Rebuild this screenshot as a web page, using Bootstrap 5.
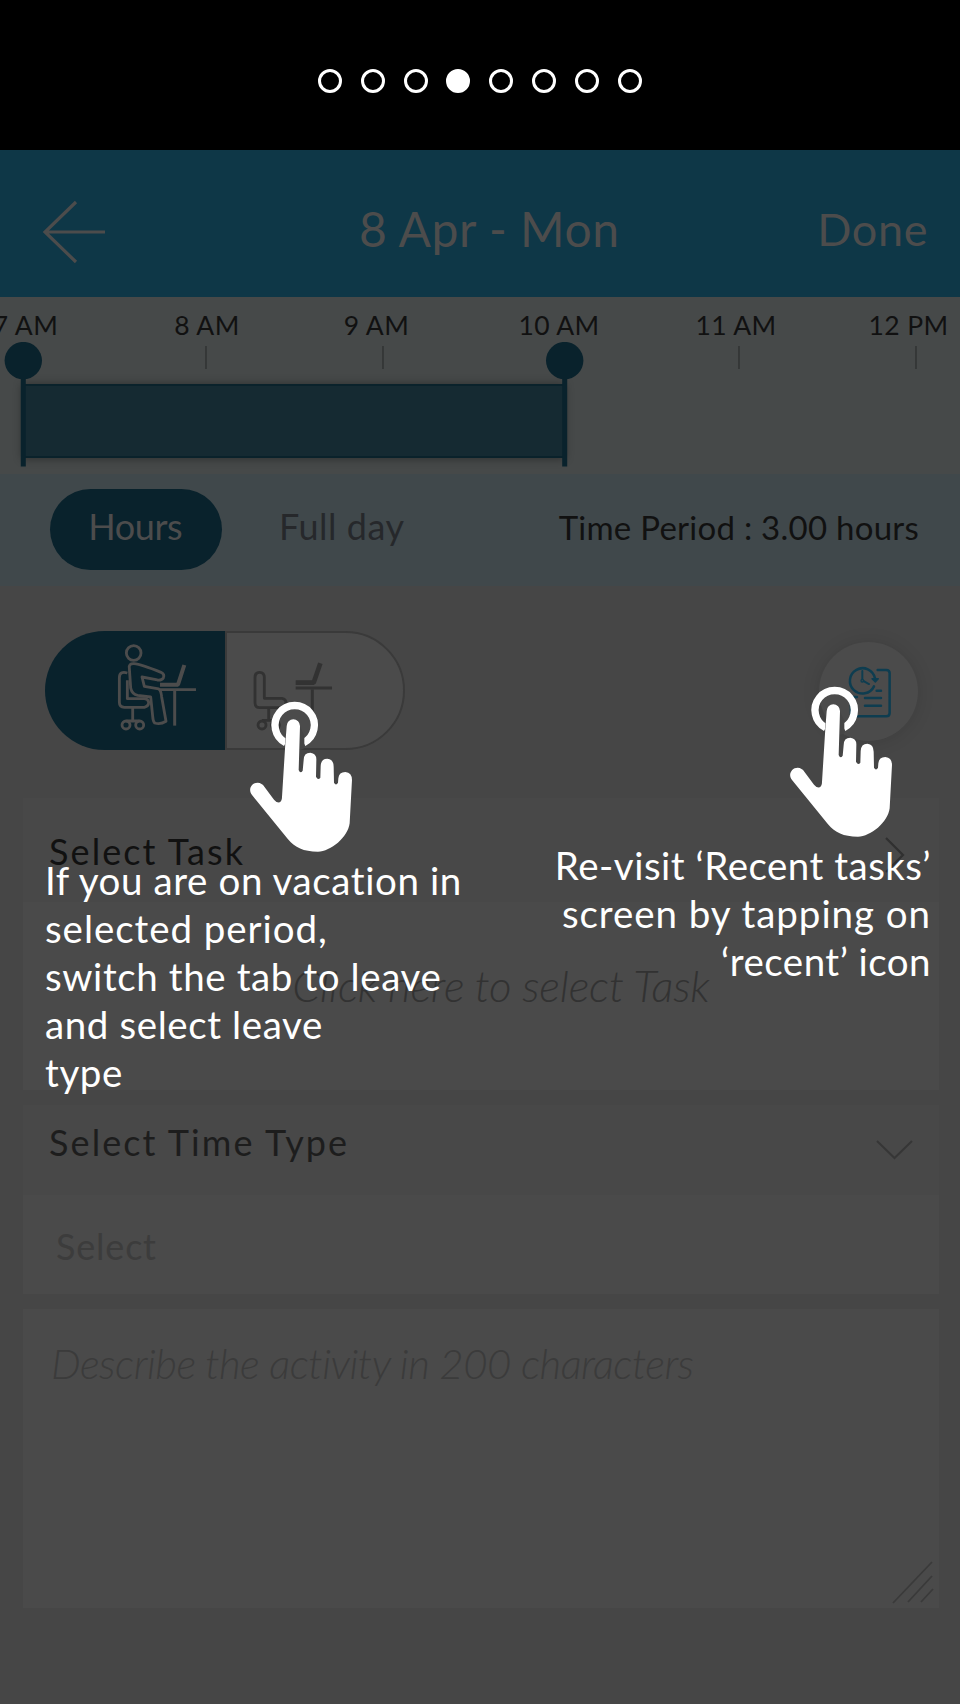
<!DOCTYPE html>
<html lang="en">
<head>
<meta charset="utf-8">
<meta name="viewport" content="width=device-width, initial-scale=1">
<title>Timesheet</title>
<link href="https://cdn.jsdelivr.net/npm/bootstrap@5.3.0/dist/css/bootstrap.min.css" rel="stylesheet">
<style>
body{background:#464646;font-family:Lato,"Open Sans",sans-serif;color:#111}
.screen{width:960px;height:1704px;overflow:hidden}
svg{display:block;flex:none}
.pager{height:150px;background:#000;padding:69px 0 0 318px}
.pager i{width:24px;height:24px;border:3px solid #fff;border-radius:50%;margin-right:18.8px}
.pager i.on{background:#fff}
.topbar{height:147px;background:#0e3747;color:#4c4c4c;padding:10px 32px 0 42px}
.topbar h1{font-size:48px;font-weight:400;margin-left:253px;letter-spacing:.55px}
.done{font-size:45px;padding-top:3px;letter-spacing:.6px}
.ruler{height:177px;background:#464949}
.hour-labels{display:grid;grid-template-columns:182px 181px 158px 207px 147px 198px;margin-left:-65.5px;padding-top:12px;height:45px;line-height:33px;font-size:26.5px;letter-spacing:.4px;text-align:center}
.band{height:112px;background:#40484b;padding:0 41px 0 49.5px}
.pill{width:172.5px;height:81px;border-radius:41px;background:#09222c;color:#4c4c4c;font-size:36px;padding:0 1px 8px 0;letter-spacing:-.4px;margin-top:-1px}
.fullday{font-size:36px;color:#26282b;padding-bottom:8px;margin-left:57px;letter-spacing:.5px}
.period{font-size:33px;padding-bottom:5px;letter-spacing:.25px}
.modes{height:212px;padding:45px 42px 0 45px}
.mode-on{width:180px;height:119px;border-radius:60px 0 0 60px;background:#09222c;padding:12px 0 0 71px}
.mode-off{width:180px;height:119px;border-radius:0 60px 60px 0;background:#4b4b4b;border:2px solid #3a3a3a;padding:27.5px 0 0 24.7px}
.recent{width:99px;height:99px;border-radius:50%;background:#4b4b4b;margin-top:11px;padding:21px 0 0 26.5px;box-shadow:0 1px 18px rgba(0,0,0,.12)}
.panel{margin:0 21px 15px 23px;background:#4a4a4a}
.panel-top{background:#484848;font-size:36px;padding-left:26px;letter-spacing:2.1px}
.ghost{font-style:italic;font-weight:300}
.pick{height:188px;font-size:44px;color:#323232;padding:0 0 22px 40px;letter-spacing:-.2px}
.pick-type{height:99px;font-size:36px;color:#3c3c3c;padding:2px 0 0 33px;letter-spacing:.8px}
.notes{height:299px;font-size:42px;line-height:50px;color:#3b3b3b;padding:29px 0 0 28px;letter-spacing:-.52px}
.grip{right:5px;bottom:4px}
.coach{color:#fff;font-size:38.5px;line-height:48px;letter-spacing:.6px;white-space:nowrap}
.coach .wide{letter-spacing:.95px}
.coach-a{left:45px;top:856px}
.coach-b{right:29px;top:841px;letter-spacing:.5px}
.tap-a{left:248.3px;top:700px}
.tap-b{left:788px;top:685px}
</style>
</head>
<body>
<svg width="0" height="0" class="position-absolute">
  <symbol id="tap" viewBox="655 270 320 460">
    <path d="M822 398A59 59 0 1 0 768 398" fill="none" stroke="#fff" stroke-width="22"/>
    <path fill="#464646" d="M766 400L771 348a20 20 0 0 1 40 0L824 378V415L812 420z"/>
    <path fill="#fff" d="M757 560L767 400L771 348a20 20 0 0 1 40 0L807 480Q812 493 819 482L822 450Q822 428 842 428Q861 430 860 450L859 500Q865 512 872 503L873 468Q874 446 893 446Q912 448 912 470L913 518Q919 529 925 518L926 505Q928 486 947 486Q967 488 967 510L960 640C955 682 903 725 865 725C820 725 797 713 775 688L667 555C654 540 665 518 684 518Q697 519 704 530L733 569Q741 579 750 577Q757 573 757 560Z"/>
  </symbol>
</svg>
<div class="screen position-relative">
  <div class="pager d-flex"><i></i><i></i><i></i><i class="on"></i><i></i><i></i><i></i><i></i></div>

  <header class="topbar d-flex align-items-center">
    <svg style="margin-top:6px" width="64" height="66" viewBox="0 0 64 66" fill="none" stroke="#4c4c4c" stroke-width="3.2"><path d="M34 3L3 33l31 30M3 33h60"/></svg>
    <h1 class="mb-0 text-nowrap">8 Apr - Mon</h1>
    <div class="done ms-auto">Done</div>
  </header>

  <section class="ruler">
    <div class="hour-labels text-nowrap"><span>7 AM</span><span>8 AM</span><span>9 AM</span><span>10 AM</span><span>11 AM</span><span>12 PM</span></div>
    <svg width="960" height="132" viewBox="0 342 960 132">
      <defs><filter id="soft" x="-5%" y="-40%" width="110%" height="180%"><feGaussianBlur stdDeviation="5"/></filter></defs>
      <path d="M206 346v23M383 346v23M739 346v23M916 346v23" stroke="#333535" stroke-width="1.7"/>
      <rect x="22" y="384" width="543" height="75" fill="#000" opacity=".35" filter="url(#soft)"/>
      <rect x="24" y="385" width="541" height="72" fill="#152a32" stroke="#0a222b" stroke-width="2"/>
      <path d="M23.3 361V466.500M564.7 361V466.500" stroke="#09222c" stroke-width="5"/>
      <circle cx="23.3" cy="360.6" r="18.7" fill="#09222c"/><circle cx="564.7" cy="360.6" r="18.7" fill="#09222c"/>
    </svg>
  </section>

  <section class="band d-flex align-items-center">
    <div class="pill d-flex align-items-center justify-content-center">Hours</div>
    <div class="fullday">Full day</div>
    <div class="period ms-auto">Time Period : 3.00 hours</div>
  </section>

  <section class="modes d-flex align-items-start">
    <div class="mode-on">
      <svg width="81.7" height="88.3" viewBox="260 100 245 265" fill="none" stroke="#4c4c4c" stroke-width="8.500" stroke-linejoin="round">
        <circle cx="313" cy="130" r="22"/>
        <path d="M300 176Q297 161 314 162Q335 164 395 188Q407 194 402 205Q397 213 384 211L338 202L345 230L388 238Q395 242 397 262L410 335Q393 346 376 340Q371 335 370 320L364 262L325 257Q308 254 304 235Z"/>
        <path d="M294 190Q270 183 270 205V278Q270 293 285 293H345Q358 290 358 278Q357 268 345 267H294V212M310 293V335M291 334H330"/>
        <circle cx="290" cy="346" r="12"/><circle cx="331" cy="346" r="12"/>
        <path d="M390 240H500" stroke-width="8"/><path d="M436 240V348" stroke-width="9"/><path d="M392 225H446L465 166" stroke-width="12" stroke-linejoin="bevel"/>
      </svg>
    </div>
    <div class="mode-off">
      <svg width="81.7" height="70" viewBox="665 150 245 210" fill="none" stroke="#323232" stroke-width="8.500" stroke-linejoin="round">
        <path d="M674 200Q674 184 688 184Q702 184 702 200V262H755Q767 264 767 276Q765 290 750 290H688Q674 290 674 275ZM715 290V328M695 328H731"/>
        <circle cx="695" cy="342" r="12"/><circle cx="735" cy="342" r="12"/>
        <path d="M796 231H905" stroke-width="9"/><path d="M846 235V350" stroke-width="9"/><path d="M796 215H850L870 157" stroke-width="14" stroke-linejoin="bevel"/>
      </svg>
    </div>
    <div class="recent ms-auto">
      <svg width="48.3" height="56.7" viewBox="255 130 145 170" fill="none" stroke="#0e3d50" stroke-width="7.500" stroke-linecap="round" stroke-linejoin="round">
        <path d="M350 151H376Q386 151 386 161V280Q386 290 376 290H280Q270 290 270 280V232H288"/>
        <path d="M342 176A38 38 0 1 0 339 200"/>
        <path d="M333 177H352L343 187Z" fill="#0e3d50" stroke-width="4"/>
        <path d="M304 154V178M308 184L324 193" stroke-width="6"/><circle cx="304" cy="183" r="4" stroke-width="4"/>
        <path d="M347 213H360M312 235H360M312 258H360"/>
      </svg>
    </div>
  </section>

  <section class="panel">
    <div class="panel-top d-flex align-items-center justify-content-between" style="height:104px;padding-top:2px">Select Task
      <svg style="margin:8px 34px 0 0" width="20" height="38" viewBox="0 0 20 38" fill="none" stroke="#303030" stroke-width="2.2"><path d="M1 2L18 19L1 36"/></svg>
    </div>
    <div class="pick ghost d-flex align-items-center justify-content-center">Click here to select Task</div>
  </section>

  <section class="panel">
    <div class="panel-top d-flex justify-content-between" style="height:90px;padding-top:10px;color:#1d1d1d">Select Time Type
      <svg style="margin:24px 26px 0 0" width="37" height="22" viewBox="0 0 37 22" fill="none" stroke="#363636" stroke-width="2"><path d="M1 2L18.500 19L36 2"/></svg>
    </div>
    <div class="pick-type d-flex align-items-center">Select</div>
  </section>

  <section class="panel notes ghost position-relative">Describe the activity in 200 characters
    <svg class="grip position-absolute" width="42" height="43" viewBox="0 0 42 43" stroke="#3a3a3a" stroke-width="1.8"><path d="M1 42L40 1M16 41L40 15M29 41L41 28"/></svg>
  </section>

  <svg class="position-absolute tap-a" width="106.700" height="153.300"><use href="#tap"/></svg>
  <svg class="position-absolute tap-b" width="106.700" height="153.300"><use href="#tap"/></svg>
  <div class="coach coach-a position-absolute">If you are on vacation in<br><span class="wide">selected period,</span><br>switch the tab to leave<br>and select leave<br>type</div>
  <div class="coach coach-b position-absolute text-end">Re-visit ‘Recent tasks’<br><span class="wide">screen by tapping on</span><br>‘recent’ icon</div>
</div>
<script src="https://cdn.jsdelivr.net/npm/bootstrap@5.3.0/dist/js/bootstrap.bundle.min.js"></script>
</body>
</html>
